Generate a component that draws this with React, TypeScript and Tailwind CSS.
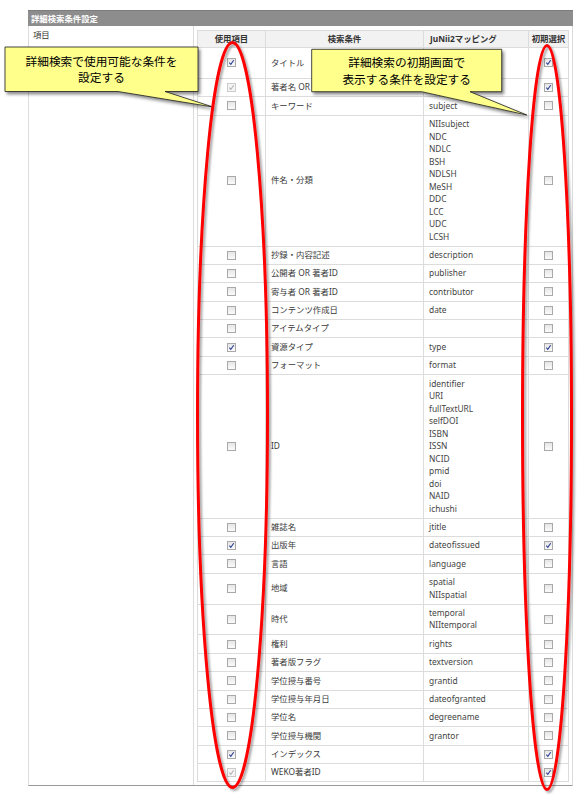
import React from 'react';

type CB = 'on' | 'off' | 'dis';

const rows: { name: string; map: string[]; use: CB; init: CB }[] = [
  { name: 'タイトル', map: ['', ''], use: 'on', init: 'on' },
  { name: '著者名 OR 著者ID', map: [''], use: 'dis', init: 'on' },
  { name: 'キーワード', map: ['subject'], use: 'off', init: 'off' },
  {
    name: '件名・分類',
    map: ['NIIsubject', 'NDC', 'NDLC', 'BSH', 'NDLSH', 'MeSH', 'DDC', 'LCC', 'UDC', 'LCSH'],
    use: 'off',
    init: 'off',
  },
  { name: '抄録・内容記述', map: ['description'], use: 'off', init: 'off' },
  { name: '公開者 OR 著者ID', map: ['publisher'], use: 'off', init: 'off' },
  { name: '寄与者 OR 著者ID', map: ['contributor'], use: 'off', init: 'off' },
  { name: 'コンテンツ作成日', map: ['date'], use: 'off', init: 'off' },
  { name: 'アイテムタイプ', map: [''], use: 'off', init: 'off' },
  { name: '資源タイプ', map: ['type'], use: 'on', init: 'on' },
  { name: 'フォーマット', map: ['format'], use: 'off', init: 'off' },
  {
    name: 'ID',
    map: ['identifier', 'URI', 'fullTextURL', 'selfDOI', 'ISBN', 'ISSN', 'NCID', 'pmid', 'doi', 'NAID', 'ichushi'],
    use: 'off',
    init: 'off',
  },
  { name: '雑誌名', map: ['jtitle'], use: 'off', init: 'off' },
  { name: '出版年', map: ['dateofissued'], use: 'on', init: 'on' },
  { name: '言語', map: ['language'], use: 'off', init: 'off' },
  { name: '地域', map: ['spatial', 'NIIspatial'], use: 'off', init: 'off' },
  { name: '時代', map: ['temporal', 'NIItemporal'], use: 'off', init: 'off' },
  { name: '権利', map: ['rights'], use: 'off', init: 'off' },
  { name: '著者版フラグ', map: ['textversion'], use: 'off', init: 'off' },
  { name: '学位授与番号', map: ['grantid'], use: 'off', init: 'off' },
  { name: '学位授与年月日', map: ['dateofgranted'], use: 'off', init: 'off' },
  { name: '学位名', map: ['degreename'], use: 'off', init: 'off' },
  { name: '学位授与機関', map: ['grantor'], use: 'off', init: 'off' },
  { name: 'インデックス', map: [''], use: 'on', init: 'on' },
  { name: 'WEKO著者ID', map: [''], use: 'dis', init: 'on' },
];

function Check({ s }: { s: CB }) {
  const box =
    s === 'dis'
      ? 'block mx-auto w-[9px] h-[9px] border border-[#cbcbcb] bg-[#f5f5f5]'
      : 'block mx-auto w-[9px] h-[9px] border border-[#a9a9a9] bg-gradient-to-b from-[#e6e6e6] to-[#fbfbfb]';
  return (
    <span className={box}>
      {s !== 'off' && (
        <svg viewBox="0 0 7 7" className="block w-[7px] h-[7px]">
          <path
            d="M1.3 3.7 L2.8 5.3 L5.7 1.3"
            fill="none"
            stroke={s === 'on' ? '#2c3f94' : '#b5b5b5'}
            strokeWidth="1.1"
          />
        </svg>
      )}
    </span>
  );
}

export default function App() {
  const td = 'border border-[#dcdcdc] py-[2.45px] px-[5px] align-middle';
  const th = 'border border-[#dcdcdc] bg-[#f2f2f2] font-bold text-[#333] py-[2px] leading-[12px] text-center';
  return (
    <div className="relative w-[582px] h-[796px] bg-white overflow-hidden font-['Noto_Sans','Noto_Sans_CJK_JP',sans-serif]">
      <div className="ml-[28px] pt-[10px] w-[545px]">
        <div className="h-[16px] bg-[#8d8d8d] border-t border-[#7c7c7c] text-white font-bold text-[8.4px] leading-[15px] pl-[3px]">
          詳細検索条件設定
        </div>
        <div className="flex border-x border-b border-x-[#dcdcdc] border-b-[#9a9a9a]">
          <div className="w-[165px] shrink-0 border-r border-[#dcdcdc] pl-[4px] pt-[3px] text-[8.4px] leading-[12.5px] text-[#333]">
            項目
          </div>
          <div className="flex-1 pl-[3px] pr-[4px] pt-[4px] pb-[3px]">
            <table className="w-full table-fixed border-collapse text-[8.4px] leading-[12.5px] text-[#444]">
              <colgroup>
                <col className="w-[68px]" />
                <col className="w-[158px]" />
                <col className="w-[105px]" />
                <col className="w-[40px]" />
              </colgroup>
              <thead>
                <tr>
                  <th className={th}>使用項目</th>
                  <th className={th}>検索条件</th>
                  <th className={`${th} !text-left pl-[6px]`}>JuNii2マッピング</th>
                  <th className={th}>初期選択</th>
                </tr>
              </thead>
              <tbody>
                {rows.map((r) => (
                  <tr key={r.name}>
                    <td className={td}>
                      <Check s={r.use} />
                    </td>
                    <td className={`${td} text-[#3a3a3a]`}>{r.name}</td>
                    <td className={td}>
                      {r.map.map((m, i) => (
                        <div key={i} className="h-[12.5px] whitespace-nowrap">
                          {m}
                        </div>
                      ))}
                    </td>
                    <td className={td}>
                      <Check s={r.init} />
                    </td>
                  </tr>
                ))}
              </tbody>
            </table>
          </div>
        </div>
      </div>

      {/* callouts */}
      <svg className="absolute left-0 top-0 w-[582px] h-[796px] pointer-events-none" viewBox="0 0 582 796">
        <defs>
          <filter id="shd" x="-10%" y="-10%" width="130%" height="140%">
            <feDropShadow dx="2" dy="2.5" stdDeviation="1.6" floodColor="#000" floodOpacity="0.45" />
          </filter>
        </defs>
        <path
          d="M5 47 H198 V91.5 H165 L213 107 L118 91.5 H5 Z"
          fill="#ffff8c"
          stroke="#1a1a1a"
          strokeWidth="0.8"
          filter="url(#shd)"
        />
        <path
          d="M311.7 49.3 H501.7 V91.7 H470 L526.7 115 L421.7 91.7 H311.7 Z"
          fill="#ffff8c"
          stroke="#1a1a1a"
          strokeWidth="0.8"
          filter="url(#shd)"
        />
      </svg>
      <div className="absolute left-[5px] top-[47px] w-[193px] h-[44.5px] flex flex-col items-center justify-center text-[11.7px] leading-[16.5px] text-black font-['Noto_Sans_CJK_JP',sans-serif]">
        <div>詳細検索で使用可能な条件を</div>
        <div>設定する</div>
      </div>
      <div className="absolute left-[311.7px] top-[49.3px] w-[190px] h-[42.4px] flex flex-col items-center justify-center text-[11.7px] leading-[17px] text-black font-['Noto_Sans_CJK_JP',sans-serif]">
        <div>詳細検索の初期画面で</div>
        <div>表示する条件を設定する</div>
      </div>

      {/* ellipses */}
      <svg className="absolute left-0 top-0 w-[582px] h-[796px] pointer-events-none" viewBox="0 0 582 796">
        <defs>
          <filter id="eshd" x="-30%" y="-5%" width="160%" height="110%">
            <feDropShadow dx="2" dy="2" stdDeviation="1.2" floodColor="#000" floodOpacity="0.35" />
          </filter>
        </defs>
        <ellipse cx="232.5" cy="415" rx="35" ry="372.5" fill="none" stroke="#ff0000" strokeWidth="3" filter="url(#eshd)" />
        <ellipse cx="547" cy="417.5" rx="24.5" ry="372" fill="none" stroke="#ff0000" strokeWidth="3" filter="url(#eshd)" />
      </svg>
    </div>
  );
}
